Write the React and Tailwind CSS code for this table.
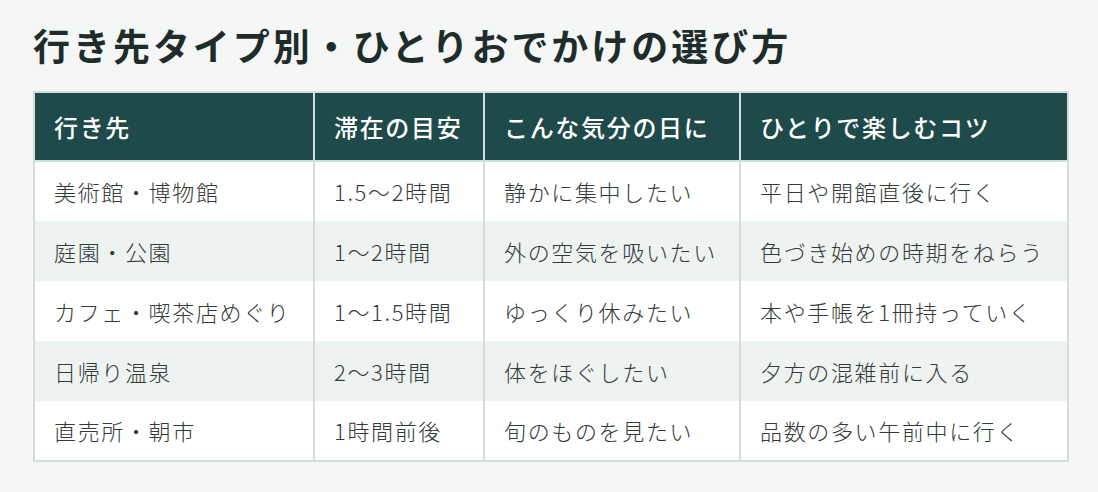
import React from 'react';

const rows = [
    ['美術館・博物館', '1.5〜2時間', '静かに集中したい', '平日や開館直後に行く'],
    ['庭園・公園', '1〜2時間', '外の空気を吸いたい', '色づき始めの時期をねらう'],
    ['カフェ・喫茶店めぐり', '1〜1.5時間', 'ゆっくり休みたい', '本や手帳を1冊持っていく'],
    ['日帰り温泉', '2〜3時間', '体をほぐしたい', '夕方の混雑前に入る'],
    ['直売所・朝市', '1時間前後', '旬のものを見たい', '品数の多い午前中に行く'],
];

const headers = ['行き先', '滞在の目安', 'こんな気分の日に', 'ひとりで楽しむコツ'];
const widths = ['w-[280px]', 'w-[170px]', 'w-[256px]', 'w-[328px]'];

export default function App() {
    return (
        <div
            className="min-h-screen bg-[#f5f7f6] px-[33px] pt-[20px] pb-8"
            style={{ fontFamily: '"Noto Sans CJK JP", "Noto Sans", sans-serif' }}
        >
            <h1 className="text-[37px] font-bold leading-[50px] tracking-[0.08em] text-[#1f2d2a]">
                行き先タイプ別・ひとりおでかけの選び方
            </h1>

            {/* Table */}
            <table className="mt-[21px] w-[1034px] table-fixed border-collapse border-2 border-[#d3dedb]">
                <thead>
                    <tr className="bg-[#1f4a4a]">
                        {headers.map((h, i) => (
                            <th
                                key={h}
                                className={`${widths[i]} h-[69px] border-2 border-[#d3dedb] px-[19px] text-left text-[24px] font-medium tracking-[0.07em] text-white`}
                            >
                                {h}
                            </th>
                        ))}
                    </tr>
                </thead>
                <tbody>
                    {rows.map((row, r) => (
                        <tr key={r} className={r % 2 === 1 ? 'bg-[#edf3f1]' : 'bg-white'}>
                            {row.map((cell, c) => (
                                <td
                                    key={c}
                                    className="h-[60px] border-x-2 border-[#d3dedb] px-[19px] text-[22px] font-light tracking-[0.075em] text-[#333a38]"
                                >
                                    {cell}
                                </td>
                            ))}
                        </tr>
                    ))}
                </tbody>
            </table>
        </div>
    );
}
